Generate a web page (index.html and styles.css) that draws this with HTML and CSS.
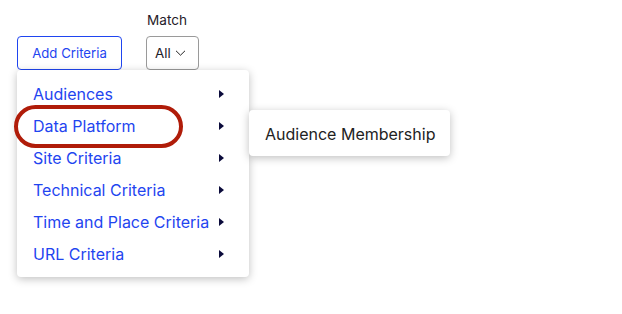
FILE: index.html
```html
<!DOCTYPE html>
<html lang="en">
<head>
    <meta charset="UTF-8">
    <title>Criteria</title>
    <link rel="stylesheet" href="styles.css">
</head>
<body>
    <div class="toolbar">
        <div class="add-wrap">
            <button class="add-button">Add Criteria</button>

            <!-- dropdown menu -->
            <ul class="menu">
                <li class="menu-item">Audiences<span class="caret"></span></li>
                <li class="menu-item active">
                    Data Platform<span class="caret"></span>
                    <ul class="submenu">
                        <li class="submenu-item">Audience Membership</li>
                    </ul>
                </li>
                <li class="menu-item">Site Criteria<span class="caret"></span></li>
                <li class="menu-item">Technical Criteria<span class="caret"></span></li>
                <li class="menu-item">Time and Place Criteria<span class="caret"></span></li>
                <li class="menu-item">URL Criteria<span class="caret"></span></li>
            </ul>
        </div>

        <div class="field">
            <label class="field-label">Match</label>
            <button class="select">All
                <svg width="11" height="6" viewBox="0 0 11 6"><path d="M1 0.8l4.5 4.4 4.5-4.4" fill="none" stroke="#222" stroke-width="1"/></svg>
            </button>
        </div>
    </div>
</body>
</html>
```

FILE: styles.css
```css
html, body {
    min-height: 100vh;
}

body {
    margin: 0;
    font-family: Inter, "Noto Sans", sans-serif;
    background-color: #fff;
    color: #1f2029;
}

.toolbar {
    display: flex;
    align-items: flex-end;
    gap: 24px;
    padding: 12px 0 0 17px;
}

.add-wrap {
    position: relative;
    z-index: 2;
}

.add-button {
    width: 105px;
    height: 34px;
    background: #fff;
    border: 1px solid #1f45f0;
    border-radius: 4px;
    color: #1f45f0;
    font-family: inherit;
    font-size: 13.2px;
    cursor: pointer;
}

.field {
    display: flex;
    flex-direction: column;
    gap: 8px;
}

.field-label {
    font-size: 13.6px;
    padding-left: 1px;
    color: #1f2029;
}

.select {
    display: flex;
    align-items: center;
    gap: 4px;
    height: 34px;
    width: 53px;
    padding: 0 8px;
    background: #fff;
    border: 1px solid #9a9a9a;
    border-radius: 4px;
    font-family: inherit;
    font-size: 13.4px;
    color: #1f2029;
}

.menu {
    position: absolute;
    top: 34px;
    left: 0;
    width: 232px;
    margin: 0;
    padding: 8px 0 7px;
    list-style: none;
    background: #fff;
    border-radius: 4px;
    box-shadow: 0 2px 8px rgba(0, 0, 0, 0.25);
}

.menu-item {
    position: relative;
    display: flex;
    align-items: center;
    justify-content: space-between;
    height: 32px;
    padding: 0 25px 0 16px;
    font-size: 16px;
    color: #1f45f0;
    white-space: nowrap;
}

.caret {
    width: 0;
    height: 0;
    border-top: 4px solid transparent;
    border-bottom: 4px solid transparent;
    border-left: 5px solid #0b0b3b;
}

.menu-item.active::before {
    content: "";
    position: absolute;
    left: -3px;
    top: -5px;
    width: 161px;
    height: 35px;
    border: 4px solid #b01c09;
    border-radius: 22px;
}

.submenu {
    position: absolute;
    top: 0;
    left: 232px;
    width: 201px;
    margin: 0;
    padding: 8px 0 6px;
    list-style: none;
    background: #fff;
    border-radius: 4px;
    box-shadow: 0 2px 8px rgba(0, 0, 0, 0.25);
}

.submenu-item {
    height: 32px;
    line-height: 32px;
    padding: 0 16px;
    font-size: 16px;
    color: #222;
    white-space: nowrap;
}
```
